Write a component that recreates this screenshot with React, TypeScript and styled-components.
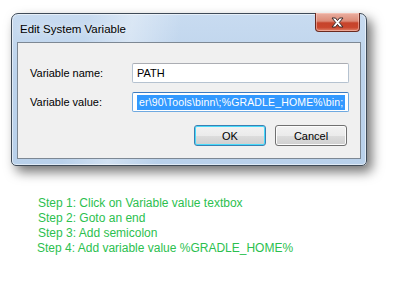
import styled, { createGlobalStyle } from "styled-components";

const GlobalStyle = createGlobalStyle`
  html, body {
    margin: 0;
    background: #ffffff;
  }
  body {
    font-family: "Liberation Sans", Arial, sans-serif;
  }
`;

const Page = styled.div`
  padding: 13px 0 0 11px;
  width: 411px;
  height: 282px;
  box-sizing: border-box;
  overflow: hidden;
`;

const Window = styled.div`
  width: 356px;
  box-sizing: border-box;
  border: 1px solid #3f4b58;
  border-radius: 7px 7px 5px 5px;
  padding: 0 5px 6px;
  background:
    linear-gradient(100deg, rgba(255,255,255,0) 20%, rgba(255,255,255,0.35) 32%, rgba(255,255,255,0) 45%),
    linear-gradient(180deg, #c8dbf0 0%, #bcd3ec 40%, #b9d1eb 100%);
  box-shadow: 5px 6px 12px rgba(0, 0, 0, 0.55), inset 0 0 0 1px rgba(255,255,255,0.55);
`;

const TitleBar = styled.div`
  height: 28px;
  display: flex;
  justify-content: space-between;
  align-items: flex-start;
`;

const Title = styled.span`
  padding: 9px 0 0 3px;
  font-size: 11.5px;
  color: #000;
  text-shadow: 0 0 6px rgba(255, 255, 255, 0.9);
`;

const CloseButton = styled.div`
  width: 45px;
  height: 19px;
  margin-top: -1px;
  margin-right: 1px;
  box-sizing: border-box;
  border: 1px solid #6a2a20;
  border-top: none;
  border-radius: 0 0 4px 4px;
  display: flex;
  align-items: center;
  justify-content: center;
  background: linear-gradient(180deg, #eab0a2 0%, #dc8a76 45%, #c6432b 55%, #c9462d 80%, #e0836a 100%);
  box-shadow: inset 0 0 0 1px rgba(255, 210, 200, 0.5);
`;

const Panel = styled.div`
  background: #f0f0f0;
  border: 1px solid #7d8894;
  padding: 20px 11px 12px 12px;
  display: flex;
  flex-direction: column;
`;

const Row = styled.div<{ $gap?: number }>`
  display: flex;
  align-items: center;
  margin-bottom: ${(p) => p.$gap ?? 9}px;
`;

const Label = styled.span`
  width: 102px;
  font-size: 11px;
  color: #000;
`;

const Field = styled.div<{ $focused?: boolean }>`
  flex: 1;
  height: 20px;
  box-sizing: border-box;
  border: 1px solid ${(p) => (p.$focused ? "#6fa9e0" : "#b5c2d0")};
  border-top-color: ${(p) => (p.$focused ? "#3d7bc0" : "#abadb3")};
  border-radius: 2px;
  background: #fff;
  display: flex;
  align-items: center;
  padding: 0 4px;
  overflow: hidden;
  white-space: nowrap;
  font-size: 11px;
  color: #000;
`;

const Selected = styled.span`
  background: #3399ff;
  color: #fff;
  font-size: 10.5px;
  letter-spacing: 0.15px;
  line-height: 15px;
  padding: 0 2px;
`;

const ButtonRow = styled.div`
  display: flex;
  justify-content: flex-end;
  gap: 9px;
  margin-top: 4px;
  padding-right: 2px;
`;

const Button = styled.div<{ $default?: boolean }>`
  width: 72px;
  height: 21px;
  box-sizing: border-box;
  border: 1px solid ${(p) => (p.$default ? "#3c7fb1" : "#707070")};
  border-radius: 3px;
  display: flex;
  align-items: center;
  justify-content: center;
  font-size: 11px;
  color: #000;
  background: linear-gradient(180deg, #f2f2f2 0%, #ebebeb 50%, #dddddd 51%, #cfcfcf 100%);
  box-shadow: inset 0 0 0 1px ${(p) => (p.$default ? "#48dbfb" : "#fcfcfc")};
`;

const Steps = styled.div`
  margin-top: 30px;
  padding-left: 27px;
  font-size: 12px;
  line-height: 15px;
  color: #2cbf4f;
`;

const Step = styled.div<{ $shift?: number }>`
  margin-left: ${(p) => p.$shift ?? 0}px;
`;

function CloseGlyph() {
  return (
    <svg width="13" height="11" viewBox="0 0 13 11">
      <path
        d="M1 1 H4.5 L6.5 3.6 L8.5 1 H12 L8.3 5.5 L12 10 H8.5 L6.5 7.4 L4.5 10 H1 L4.7 5.5 Z"
        fill="#ffffff"
        stroke="#3a2a2a"
        strokeWidth="1"
        strokeLinejoin="round"
      />
    </svg>
  );
}

export default function App() {
  return (
    <Page>
      <GlobalStyle />
      <Window>
        <TitleBar>
          <Title>Edit System Variable</Title>
          <CloseButton>
            <CloseGlyph />
          </CloseButton>
        </TitleBar>
        <Panel>
          <Row>
            <Label>Variable name:</Label>
            <Field>PATH</Field>
          </Row>
          <Row $gap={9}>
            <Label>Variable value:</Label>
            <Field $focused>
              <Selected>er\90\Tools\binn\;%GRADLE_HOME%\bin;</Selected>
            </Field>
          </Row>
          <ButtonRow>
            <Button $default>OK</Button>
            <Button>Cancel</Button>
          </ButtonRow>
        </Panel>
      </Window>
      <Steps>
        <Step>Step 1: Click on Variable value textbox</Step>
        <Step>Step 2: Goto an end</Step>
        <Step>Step 3: Add semicolon</Step>
        <Step $shift={-1}>Step 4: Add variable value %GRADLE_HOME%</Step>
      </Steps>
    </Page>
  );
}
